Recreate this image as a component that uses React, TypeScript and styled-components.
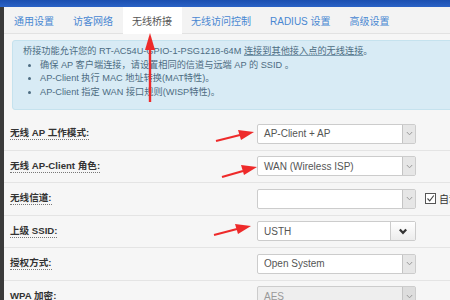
import React from 'react';
import styled, { createGlobalStyle } from 'styled-components';

const GlobalStyle = createGlobalStyle`
  html, body {
    margin: 0;
    padding: 0;
    overflow: hidden;
    background: #333;
  }
  body {
    font-family: "Liberation Sans", "Noto Sans CJK SC", sans-serif;
  }
`;

const tabs = ['通用设置', '访客网络', '无线桥接', '无线访问控制', 'RADIUS 设置', '高级设置'];

const rows = [
  { label: '无线 AP 工作模式:', value: 'AP-Client + AP', kind: 'select' },
  { label: '无线 AP-Client 角色:', value: 'WAN (Wireless ISP)', kind: 'select' },
  { label: '无线信道:', value: '', kind: 'select', extra: true },
  { label: '上级 SSID:', value: 'USTH', kind: 'input' },
  { label: '授权方式:', value: 'Open System', kind: 'select' },
  { label: 'WPA 加密:', value: 'AES', kind: 'select', disabled: true },
];

export default () => (
  <>
    <GlobalStyle />
    <Screen>
      <TopBar />
      <Page>
        <TabBar>
          {tabs.map((t) => (
            <Tab key={t} active={t === '无线桥接'}>
              {t}
            </Tab>
          ))}
        </TabBar>
        <Info>
          <p>
            桥接功能允许您的 RT-AC54U-GPIO-1-PSG1218-64M <u>连接到其他接入点的无线连接</u>。
          </p>
          <ul>
            <li>确保 AP 客户端连接，请设置相同的信道与远端 AP 的 SSID 。</li>
            <li>AP-Client 执行 MAC 地址转换(MAT特性)。</li>
            <li>AP-Client 指定 WAN 接口规则(WISP特性)。</li>
          </ul>
        </Info>
        <Form>
          {rows.map((r) => (
            <Row key={r.label}>
              <Label>{r.label}</Label>
              {r.kind === 'select' ? (
                <Select disabled={r.disabled}>
                  <span>{r.value}</span>
                  <Caret disabled={r.disabled}>
                    <svg width="7" height="5" viewBox="0 0 7 5">
                      <path d="M0.8 1 L3.5 3.8 L6.2 1" fill="none" stroke="#999" strokeWidth="1" />
                    </svg>
                  </Caret>
                </Select>
              ) : (
                <InputGroup>
                  <span>{r.value}</span>
                  <DropBtn>
                    <svg width="10" height="7" viewBox="0 0 10 7">
                      <path d="M1.8 1.5 L5 4.8 L8.2 1.5" fill="none" stroke="#333" strokeWidth="2.2" />
                    </svg>
                  </DropBtn>
                </InputGroup>
              )}
              {r.extra && (
                <Check>
                  <Box>
                    <svg width="9" height="9" viewBox="0 0 9 9">
                      <path d="M1.5 4.5 L3.7 6.8 L7.8 1.5" fill="none" stroke="#444" strokeWidth="1.1" />
                    </svg>
                  </Box>
                  自动
                </Check>
              )}
            </Row>
          ))}
        </Form>
        <Arrows width="450" height="300" viewBox="0 0 450 300">
          <g fill="#ee2a2a" stroke="#ee2a2a">
            <line x1="150" y1="102" x2="150" y2="48" strokeWidth="2.4" />
            <polygon points="150,33 145,50 155,50" stroke="none" />
            <line x1="216" y1="141" x2="240" y2="135" strokeWidth="2.2" />
            <polygon points="254,132 238,130 241,140" stroke="none" />
            <line x1="222" y1="177" x2="243" y2="171" strokeWidth="2.2" />
            <polygon points="257,167 241,165 244,175" stroke="none" />
            <line x1="214" y1="235" x2="237" y2="229" strokeWidth="2.2" />
            <polygon points="251,226 235,224 238,234" stroke="none" />
          </g>
        </Arrows>
      </Page>
    </Screen>
  </>
);

const Screen = styled.div`
  width: 450px;
  height: 300px;
  display: flex;
  flex-direction: column;
  background: #3a3a3a;
  overflow: hidden;
`;

const TopBar = styled.div`
  height: 7px;
  flex: none;
  background: linear-gradient(#1b4fb0, #2a62c6);
`;

const Page = styled.div`
  position: relative;
  flex: 1;
  margin-left: 4px;
  width: 600px;
  background: #f6f6f6;
`;

const TabBar = styled.div`
  display: flex;
  height: 26px;
  background: #f3f3f3;
  border-bottom: 1px solid #e2e2e2;
`;

const Tab = styled.div<{ active?: boolean }>`
  display: flex;
  align-items: center;
  padding: 0 9.5px;
  margin-bottom: -1px;
  font-size: 10px;
  color: ${({ active }) => (active ? '#555' : '#4a88d2')};
  background: ${({ active }) => (active ? '#fff' : 'transparent')};
  border-bottom: 1px solid ${({ active }) => (active ? '#fff' : 'transparent')};
  &:first-child {
    padding-left: 10px;
  }
`;

const Info = styled.div`
  margin: 6px 0 0 8px;
  height: 70px;
  box-sizing: border-box;
  padding: 4px 10px;
  background: #d8ebf5;
  border: 1px solid #c5e2ee;
  border-radius: 3px;
  color: #4d6c82;
  font-size: 9.2px;
  line-height: 13.7px;
  p {
    margin: 0;
  }
  u {
    text-decoration-color: #7a9bb0;
  }
  ul {
    margin: 0;
    padding-left: 17px;
  }
`;

const Form = styled.div`
  margin-top: 8px;
  display: flex;
  flex-direction: column;
`;

const Row = styled.div`
  display: grid;
  grid-template-columns: 247px 159px auto;
  align-items: center;
  height: 31.5px;
  padding-left: 6px;
  border-bottom: 1px solid #e4e4e4;
`;

const Label = styled.span`
  justify-self: start;
  font-size: 9.6px;
  font-weight: bold;
  color: #333;
  border-bottom: 1px dotted #777;
  line-height: 12px;
`;

const Select = styled.div<{ disabled?: boolean }>`
  height: 20px;
  box-sizing: border-box;
  display: flex;
  align-items: center;
  justify-content: space-between;
  background: ${({ disabled }) => (disabled ? '#eee' : '#fff')};
  border: 1px solid #ccc;
  border-radius: 2px;
  font-size: 10px;
  color: ${({ disabled }) => (disabled ? '#999' : '#555')};
  span {
    padding-left: 6px;
  }
`;

const Caret = styled.div<{ disabled?: boolean }>`
  width: 12px;
  height: 18px;
  display: flex;
  align-items: center;
  justify-content: center;
  background: ${({ disabled }) => (disabled ? '#ddd' : '#e6e6e6')};
  border-left: 1px solid #c4c4c4;
`;

const InputGroup = styled(Select)`
  height: 20px;
`;

const DropBtn = styled.div`
  width: 24px;
  height: 18px;
  display: flex;
  align-items: center;
  justify-content: center;
  background: linear-gradient(#fff, #ececec);
  border-left: 1px solid #ccc;
`;

const Check = styled.div`
  display: flex;
  align-items: center;
  gap: 3px;
  margin-left: 9px;
  font-size: 10px;
  color: #333;
`;

const Box = styled.span`
  width: 9px;
  height: 9px;
  border: 1px solid #555;
  display: flex;
  align-items: center;
  justify-content: center;
  background: #fff;
`;

const Arrows = styled.svg`
  position: absolute;
  left: -4px;
  top: -7px;
  pointer-events: none;
`;
